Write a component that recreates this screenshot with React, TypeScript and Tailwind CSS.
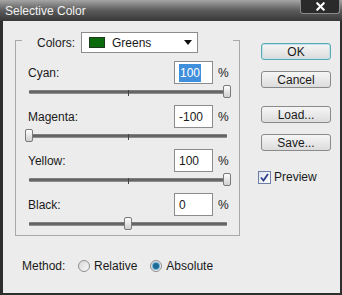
import { X } from "lucide-react"

type Row = { label: string; value: string; pos: number; selected?: boolean }

const rows: Row[] = [
  { label: "Cyan:", value: "100", pos: 1, selected: true },
  { label: "Magenta:", value: "-100", pos: 0 },
  { label: "Yellow:", value: "100", pos: 1 },
  { label: "Black:", value: "0", pos: 0.5 },
]

function Slider({ pos }: { pos: number }) {
  return (
    <div className="relative h-[21px] w-[198px] ml-[13px]">
      <div className="absolute left-0 right-0 top-[6px] h-[4px] rounded-[1px] bg-gradient-to-b from-[#8e8e8e] via-[#565656] to-[#a0a0a0]" />
      <div className="absolute left-[99px] top-[6px] h-[6px] w-px bg-[#444]" />
      <div
        className="absolute top-[1px] h-[13px] w-[8px] rounded-[2px] border border-[#7a7a7a] bg-gradient-to-b from-white to-[#cfcfcf]"
        style={{ left: pos * 198 - 4 }}
      />
    </div>
  )
}

function Button({ label, focused }: { label: string; focused?: boolean }) {
  return (
    <div
      className={`flex h-[17px] w-[70px] items-center justify-center rounded-[3px] border bg-gradient-to-b from-[#f6f6f6] to-[#dcdcdc] text-[12px] text-[#1a1a1a] ${
        focused ? "border-[#5aa9b5] shadow-[inset_0_0_0_1px_#bfe3e8]" : "border-[#8a8a8a]"
      }`}
    >
      {label}
    </div>
  )
}

function Radio({ checked }: { checked?: boolean }) {
  return (
    <div className="flex h-[12px] w-[12px] items-center justify-center rounded-full border border-[#8e8e8e] bg-gradient-to-br from-[#d8d8d8] to-[#f8f8f8]">
      {checked && <div className="h-[6px] w-[6px] rounded-full bg-[#1f6a95] shadow-[0_0_0_1px_#6fb3d8]" />}
    </div>
  )
}

export default function App() {
  return (
    <div className="flex h-[295px] w-[342px] flex-col bg-[#2e2e2e] font-['Liberation_Sans',Arial,sans-serif] text-[12px] text-[#1a1a1a]">
      {/* Title bar */}
      <div className="relative flex h-[21px] items-center bg-gradient-to-b from-[#a6a6a6] via-[#5c5c5c] to-[#383838] pl-[5px]">
        <span className="text-[12px] text-[#f2f2f2]">Selective Color</span>
        <div className="absolute right-[2px] top-0 flex h-[14px] w-[40px] items-center justify-center rounded-b-[3px] border border-t-0 border-[#8a8a8a] bg-[#2a2a2a]">
          <X size={13} strokeWidth={4} className="text-white" />
        </div>
      </div>

      {/* Body */}
      <div className="mb-[2px] ml-[3px] mr-[2px] flex flex-1 bg-[#ececec]">
        <div className="flex flex-col pl-[12px] pt-[19px]">
          <div className="h-[196px] w-[225px] border border-[#a9a9a9]">
            <div className="-mt-[9px] ml-[6px] flex h-[21px] w-[211px] items-center bg-[#ececec] pl-[15px]">
              <span className="w-[44px]">Colors:</span>
              <div className="flex h-[21px] w-[117px] items-center border border-[#8c8c8c] bg-white pl-[7px] pr-[5px]">
                <div className="h-[11px] w-[16px] border border-[#1c3a1c] bg-[#0b6a0b]" />
                <span className="ml-[7px] flex-1">Greens</span>
                <svg width="8" height="5" viewBox="0 0 8 5">
                  <polygon points="0,0 8,0 4,5" fill="#111" />
                </svg>
              </div>
            </div>
            <div className="mt-[8px] flex flex-col">
              {rows.map((r) => (
                <div key={r.label} className="flex flex-col">
                  <div className="flex h-[23px] items-center pl-[12px]">
                    <span className="w-[146px]">{r.label}</span>
                    <div className="flex h-[23px] w-[39px] items-center border border-[#8c8c8c] bg-white pl-[4px]">
                      {r.selected ? <span className="bg-[#3f8fdc] px-[1px] text-white">{r.value}</span> : <span>{r.value}</span>}
                    </div>
                    <span className="ml-[5px]">%</span>
                  </div>
                  <Slider pos={r.pos} />
                </div>
              ))}
            </div>
          </div>

          <div className="ml-[7px] mt-[22px] flex h-[16px] items-center">
            <span className="w-[56px]">Method:</span>
            <Radio />
            <span className="ml-[4px]">Relative</span>
            <div className="ml-[13px]">
              <Radio checked />
            </div>
            <span className="ml-[4px]">Absolute</span>
          </div>
        </div>

        <div className="flex flex-col pl-[21px] pt-[22px]">
          <Button label="OK" focused />
          <div className="mt-[11px]">
            <Button label="Cancel" />
          </div>
          <div className="mt-[18px]">
            <Button label="Load..." />
          </div>
          <div className="mt-[11px]">
            <Button label="Save..." />
          </div>
          <div className="-ml-[3px] mt-[17px] flex items-center">
            <div className="flex h-[13px] w-[13px] items-center justify-center border border-[#6b7fa6] bg-gradient-to-br from-[#dfe3ec] to-white">
              <svg width="9" height="9" viewBox="0 0 9 9">
                <path d="M1 4.5 L3.5 7.5 L8 1" fill="none" stroke="#2c3f8c" strokeWidth="1.8" />
              </svg>
            </div>
            <span className="ml-[3px]">Preview</span>
          </div>
        </div>
      </div>
    </div>
  )
}
